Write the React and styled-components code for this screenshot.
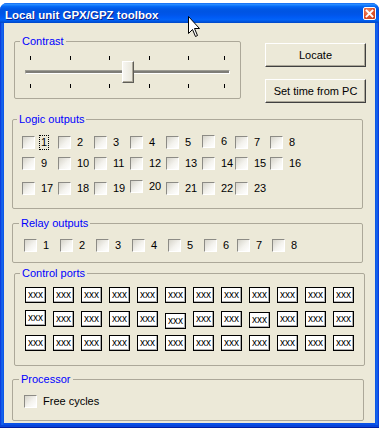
import React from 'react'
import styled, { createGlobalStyle } from 'styled-components'

const GlobalStyle = createGlobalStyle`
  html, body { margin: 0; padding: 0; background: #fff; }
  body {
    font-family: "Liberation Sans", Arial, sans-serif;
    font-size: 11px;
    color: #000;
  }
  * { box-sizing: border-box; }
`

const Page = styled.div`
  position: relative;
  width: 381px;
  height: 433px;
  padding-top: 3px;
  overflow: hidden;
`

const Window = styled.div`
  width: 379px;
  background: linear-gradient(to right, #0831D9 0, #166AEE 2px, #0A50E6 4px, #0A50E6 375px, #166AEE 377px, #0831D9 379px);
  border-radius: 7px 7px 0 0;
  padding: 0 4px 5px;
  box-shadow: inset 0 -1px 0 #001EA0, inset 0 -3px 0 #0844D8;
`

const TitleBar = styled.div`
  margin: 0 -4px;
  height: 20px;
  display: flex;
  justify-content: space-between;
  align-items: flex-start;
  padding: 0 3px 0 5px;
  border-radius: 7px 7px 0 0;
  background: linear-gradient(to bottom, #0058EE 0%, #3593FF 5%, #1B82FF 10%, #0467F5 18%, #0057E5 30%, #0054E3 45%, #0056EB 60%, #005BF5 72%, #0263F8 84%, #0056E0 92%, #0046C6 100%);
`

const Title = styled.span`
  margin-top: 6px;
  color: #fff;
  font-weight: bold;
  font-size: 11.5px;
  line-height: 13px;
  text-shadow: 1px 1px 0 #0A1E8C;
`

const CloseButton = styled.div`
  margin-top: 4px;
  width: 13px;
  height: 13px;
  border: 1px solid #fff;
  border-radius: 2px;
  background: radial-gradient(circle at 35% 30%, #F0906C 0%, #E2562F 45%, #C33A18 100%);
  display: flex;
  align-items: center;
  justify-content: center;
`

const Client = styled.div`
  background: #ECE9D8;
  height: 400px;
  padding-top: 12px;
  display: flex;
  flex-direction: column;
  align-items: flex-start;
`

const TopRow = styled.div`
  display: flex;
  align-items: flex-start;
`

const Group = styled.fieldset`
  margin: ${p => p.$mt || 0}px 0 0 ${p => p.$ml}px;
  padding: 0 0 ${p => p.$pb}px 0;
  width: ${p => p.$w}px;
  min-inline-size: 0;
  border: 1px solid #ACA899;
  border-radius: 2px;
`

const Legend = styled.legend`
  color: #0000FF;
  padding: 0 2px;
  margin-left: ${p => p.$ml || 5}px;
  font-size: 11px;
  line-height: 13px;
  height: 13px;
`

const Ticks = styled.div`
  display: grid;
  grid-template-columns: 40px 39px 40px 39px 36px 1px;
  margin: ${p => p.$mt}px 0 0 15px;
  height: 4px;
`

const Tick = styled.span`
  width: 1px;
  height: 4px;
  background: #000;
`

const Rail = styled.div`
  position: relative;
  height: 22px;
  margin: 1px 0;
  padding: 9px 0 0 10px;
`

const Track = styled.div`
  width: 205px;
  height: 4px;
  border-top: 1px solid #9D9C93;
  border-left: 1px solid #9D9C93;
  border-bottom: 1px solid #fff;
  border-right: 1px solid #fff;
  background: #7E7D77;
`

const Thumb = styled.div`
  position: absolute;
  left: 107px;
  top: 0;
  width: 12px;
  height: 22px;
  background: linear-gradient(to right, #F7F6F1, #E8E6DA);
  border: 1px solid;
  border-color: #fff #5E5D57 #5E5D57 #fff;
  box-shadow: inset -1px -1px 0 #ACA899;
`

const Buttons = styled.div`
  display: flex;
  flex-direction: column;
  gap: 12px;
  margin: 8px 0 0 24px;
`

const Button = styled.button`
  width: 101px;
  height: 24px;
  padding: 0;
  font-family: "Liberation Sans", Arial, sans-serif;
  font-size: 11px;
  color: #000;
  background: #ECE9D8;
  border: 1px solid;
  border-color: #fff #404040 #404040 #fff;
  box-shadow: inset -1px -1px 0 #ACA899;
`

const CheckRow = styled.div`
  display: grid;
  grid-template-columns: ${p => p.$cols || '36px 36px 36px 36px 36px 33px 35px auto'};
  grid-auto-rows: 13px;
  align-items: start;
  margin: ${p => p.$mt}px 0 0 ${p => p.$ml}px;
`

const Check = styled.label`
  display: flex;
  align-items: center;
  height: 13px;
  margin-top: ${p => p.$dy || 0}px;
  white-space: nowrap;
`

const Box = styled.span`
  flex: none;
  width: 13px;
  height: 13px;
  border: 1px solid;
  border-color: #8C8B85 #fff #fff #8C8B85;
  background: linear-gradient(135deg, #D6D4CA 0%, #F4F3EE 55%, #fff 100%);
`

const CheckText = styled.span`
  margin-left: ${p => (p.$focus ? 5 : 6)}px;
  padding: ${p => (p.$focus ? '0 1px' : '0')};
  line-height: 13px;
  outline: ${p => (p.$focus ? '1px dotted #000' : 'none')};
`

const PortGrid = styled.div`
  display: grid;
  grid-template-columns: repeat(12, 21px);
  grid-auto-rows: 16px;
  column-gap: 7px;
  row-gap: 8px;
  margin: 7px 0 0 10px;
`

const Port = styled.div`
  width: 21px;
  height: 16px;
  margin-top: ${p => p.$dy || 0}px;
  border: 1px solid #000;
  background: #fff;
  box-shadow: inset -1px -1px 0 #B0B0B0;
  font-size: 10px;
  line-height: 13px;
  text-align: center;
`

const Cursor = styled.svg`
  position: absolute;
  left: 188px;
  top: 16px;
`

const logicRows = [
  { mt: 10, items: [1, 2, 3, 4, 5, 6, 7, 8] },
  { mt: 8, items: [9, 10, 11, 12, 13, 14, 15, 16] },
  { mt: 12, items: [17, 18, 19, 20, 21, 22, 23] },
]

const lifted = { 6: -1, 20: -2 }

const portRows = [
  [0, 0, 0, 0, 0, 0, 0, 0, 0, 0, 0, 0],
  [-1, 0, 0, 0, 0, 2, 0, 0, 1, 0, 0, 0],
  [0, 0, 0, 0, 0, 0, 0, 0, 0, 0, 0, 0],
]

function CheckItem({ label, dy, focus }) {
  return (
    <Check $dy={dy}>
      <Box />
      <CheckText $focus={focus}>{label}</CheckText>
    </Check>
  )
}

export default function App() {
  const ticks = [0, 1, 2, 3, 4, 5]
  return (
    <Page>
      <GlobalStyle />
      <Window>
        <TitleBar>
          <Title>Local unit GPX/GPZ toolbox</Title>
          <CloseButton>
            <svg width="9" height="9" viewBox="0 0 9 9">
              <path d="M1.5 1.5 L7.5 7.5 M7.5 1.5 L1.5 7.5" stroke="#fff" strokeWidth="1.8" strokeLinecap="square" />
            </svg>
          </CloseButton>
        </TitleBar>
        <Client>
          <TopRow>
            <Group $ml={10} $w={227} $pb={10}>
              <Legend>Contrast</Legend>
              <Ticks $mt={8}>
                {ticks.map(t => <Tick key={t} />)}
              </Ticks>
              <Rail>
                <Track />
                <Thumb />
              </Rail>
              <Ticks $mt={0}>
                {ticks.map(t => <Tick key={t} />)}
              </Ticks>
            </Group>
            <Buttons>
              <Button>Locate</Button>
              <Button>Set time from PC</Button>
            </Buttons>
          </TopRow>

          <Group $ml={8} $mt={10} $w={351} $pb={13}>
            <Legend $ml={4}>Logic outputs</Legend>
            {logicRows.map((row, i) => (
              <CheckRow key={i} $mt={row.mt} $ml={9}>
                {row.items.map(n => (
                  <CheckItem key={n} label={n} dy={lifted[n]} focus={n === 1} />
                ))}
              </CheckRow>
            ))}
          </Group>

          <Group $ml={8} $mt={8} $w={351} $pb={10}>
            <Legend $ml={6}>Relay outputs</Legend>
            <CheckRow $mt={9} $ml={11}>
              {[1, 2, 3, 4, 5, 6, 7, 8].map(n => (
                <CheckItem key={n} label={n} />
              ))}
            </CheckRow>
          </Group>

          <Group $ml={10} $mt={4} $w={351} $pb={14}>
            <Legend>Control ports</Legend>
            <PortGrid>
              {portRows.map((row, r) =>
                row.map((dy, c) => <Port key={r + '-' + c} $dy={dy}>xxx</Port>)
              )}
            </PortGrid>
          </Group>

          <Group $ml={8} $mt={7} $w={352} $pb={12}>
            <Legend $ml={6}>Processor</Legend>
            <CheckRow $mt={9} $ml={11} $cols="auto">
              <CheckItem label="Free cycles" />
            </CheckRow>
          </Group>
        </Client>
      </Window>
      <Cursor width="13" height="22" viewBox="0 0 13 22">
        <path d="M0.5 0.5 V17.5 L4.5 13.5 L7.5 20.5 L9.5 19.5 L6.5 12.5 H11.5 Z" fill="#fff" stroke="#000" strokeWidth="1" />
      </Cursor>
    </Page>
  )
}
